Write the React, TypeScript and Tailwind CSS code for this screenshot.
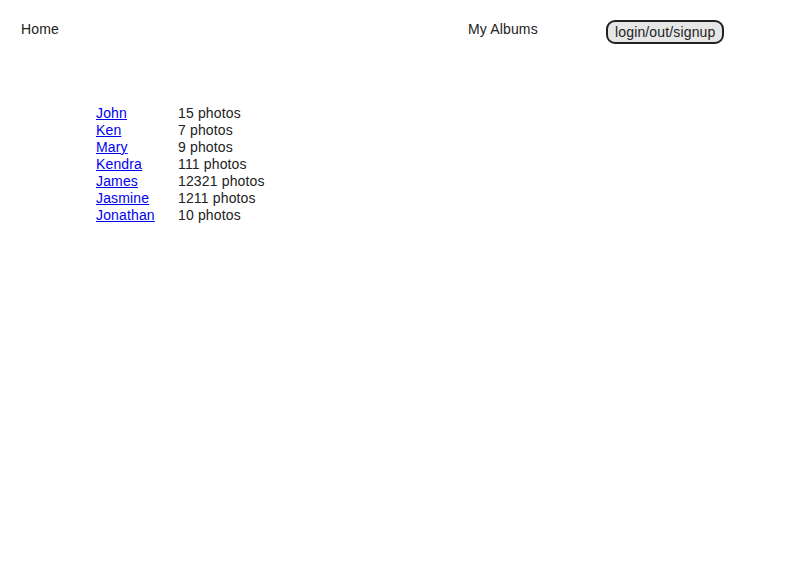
const albums = [
  { name: "John", count: 15 },
  { name: "Ken", count: 7 },
  { name: "Mary", count: 9 },
  { name: "Kendra", count: 111 },
  { name: "James", count: 12321 },
  { name: "Jasmine", count: 1211 },
  { name: "Jonathan", count: 10 },
];

export default function App() {
  return (
    <div className="min-h-[570px] bg-white text-[14px] leading-[17px] tracking-[0.15px] text-[#222] font-['Liberation_Sans',Arial,sans-serif]">
      <nav className="flex items-center h-[37px] pt-[21px] pl-[21px]">
        <a className="w-[447px]">Home</a>
        <a className="w-[138px]">My Albums</a>
        <button className="h-[24px] mt-[6px] px-[7px] border-2 border-[#222] rounded-[9px] bg-[#e6e6e6] text-[#222] leading-[17px] tracking-[0.15px]">
          login/out/signup
        </button>
      </nav>
      <div className="pt-[68px] pl-[96px]">
        {albums.map((a) => (
          <div key={a.name} className="flex">
            <a href="#" className="w-[82px] text-[#0000ee] underline">
              {a.name}
            </a>
            <span>{a.count} photos</span>
          </div>
        ))}
      </div>
    </div>
  );
}
